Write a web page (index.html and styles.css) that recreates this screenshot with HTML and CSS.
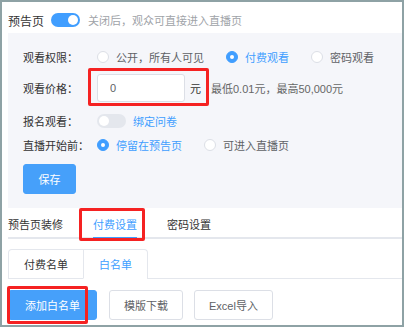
FILE: index.html
```html
<!DOCTYPE html>
<html lang="zh-CN">
<head>
    <meta charset="UTF-8">
    <meta name="viewport" content="width=device-width, initial-scale=1.0">
    <title>预告页设置</title>
    <link rel="stylesheet" href="styles.css">
</head>
<body>

<div class="frame">
    <div class="header">
        <span class="title">预告页</span>
        <span class="switch on"><i></i></span>
        <span class="tip">关闭后，观众可直接进入直播页</span>
    </div>

    <div class="panel">
        <div class="row row-auth">
            <span class="label">观看权限：</span>
            <span class="radio"><i></i>公开，所有人可见</span>
            <span class="radio checked"><i></i>付费观看</span>
            <span class="radio"><i></i>密码观看</span>
        </div>
        <div class="row row-price">
            <span class="label">观看价格：</span>
            <input type="text" class="price" value="0">
            <span class="unit">元</span>
            <span class="hint">最低0.01元，最高50,000元</span>
        </div>
        <div class="row row-signup">
            <span class="label">报名观看：</span>
            <span class="switch"><i></i></span>
            <a class="link">绑定问卷</a>
        </div>
        <div class="row row-before">
            <span class="label">直播开始前：</span>
            <span class="radio checked"><i></i>停留在预告页</span>
            <span class="radio"><i></i>可进入直播页</span>
        </div>
        <button class="btn btn-primary btn-save">保存</button>
    </div>

    <div class="tabs">
        <span class="tab">预告页装修</span>
        <span class="tab active">付费设置</span>
        <span class="tab">密码设置</span>
    </div>

    <div class="card-tabs">
        <div class="card-group">
            <span class="card-tab">付费名单</span>
            <span class="card-tab active">白名单</span>
        </div>
    </div>

    <div class="actions">
        <button class="btn btn-primary">添加白名单</button>
        <button class="btn">模版下载</button>
        <button class="btn">Excel导入</button>
    </div>

    <!-- 标注框 -->
    <div class="mark mark-price"></div>
    <div class="mark mark-tab"></div>
    <div class="mark mark-add"></div>
</div>

</body>
</html>
```

FILE: styles.css
```css
body {
    margin: 0;
    background: #fff;
    font-family: "Liberation Sans", "Noto Sans CJK SC", sans-serif;
    font-size: 11px;
    color: #333;
}
.frame {
    position: relative;
    width: 404px;
    height: 327px;
    box-sizing: border-box;
    border: 2px solid #8ea2a5;
    padding-left: 6px;
    overflow: hidden;
    background: #fff;
}
.header {
    display: flex;
    align-items: center;
    height: 24px;
    padding-top: 6px;
}
.title {
    font-size: 12px;
    color: #333;
}
.switch {
    position: relative;
    display: inline-block;
    width: 29px;
    height: 14px;
    border-radius: 7px;
    background: #e4e7ed;
    margin-left: 7px;
}
.switch i {
    position: absolute;
    top: 2px;
    left: 2px;
    width: 10px;
    height: 10px;
    border-radius: 50%;
    background: #fff;
}
.switch.on {
    background: #409eff;
}
.switch.on i {
    left: 17px;
}
.tip {
    margin-left: 8px;
    color: #a0a3a8;
}
.panel {
    margin-top: 1px;
    background: #f5f6fa;
    padding: 11px 0 14px 15px;
}
.row {
    display: flex;
    align-items: center;
}
.label {
    width: 74px;
    color: #333;
}
.row-auth {
    height: 25px;
}
.row-price {
    height: 28px;
    margin-top: 5px;
}
.row-signup {
    height: 22px;
    margin-top: 8px;
}
.row-before {
    height: 22px;
    margin-top: 2px;
}
.radio {
    display: flex;
    align-items: center;
    margin-right: 22px;
    color: #606266;
}
.radio i {
    width: 10px;
    height: 10px;
    border: 1px solid #dcdfe6;
    border-radius: 50%;
    background: #fff;
    margin-right: 7px;
    box-sizing: content-box;
}
.radio.checked {
    color: #409eff;
}
.radio.checked i {
    background: #409eff;
    border-color: #409eff;
    position: relative;
}
.radio.checked i::after {
    content: "";
    position: absolute;
    left: 3px;
    top: 3px;
    width: 4px;
    height: 4px;
    border-radius: 50%;
    background: #fff;
}
.price {
    width: 88px;
    height: 28px;
    box-sizing: border-box;
    border: 1px solid #dcdfe6;
    border-radius: 3px;
    padding: 0 12px;
    font-family: inherit;
    font-size: 11px;
    color: #606266;
    background: #fff;
    outline: none;
}
.unit {
    margin-left: 5px;
    color: #333;
}
.hint {
    margin-left: 10px;
    color: #666;
}
.row-signup .switch {
    margin-left: 0;
}
.link {
    margin-left: 7px;
    color: #409eff;
}
.btn {
    height: 30px;
    padding: 0 14px;
    border: 1px solid #dcdfe6;
    border-radius: 3px;
    background: #fff;
    color: #606266;
    font-family: inherit;
    font-size: 11px;
    cursor: pointer;
}
.btn-primary {
    background: #46a0fa;
    border-color: #46a0fa;
    color: #fff;
}
.btn-save {
    display: block;
    width: 53px;
    margin-top: 8px;
    padding: 0;
}
.tabs {
    display: flex;
    height: 31px;
    box-shadow: inset 0 -2px 0 #e4e7ed;
}
.tab {
    display: flex;
    align-items: center;
    margin-right: 30px;
    box-sizing: border-box;
    height: 31px;
    color: #333;
}
.tab.active {
    color: #409eff;
    border-bottom: 2px solid #409eff;
    padding-top: 2px;
}
.card-tabs {
    display: flex;
    margin-top: 10px;
    border-bottom: 1px solid #e4e7ed;
}
.card-group {
    display: flex;
    border: 1px solid #e4e7ed;
    border-bottom: none;
    border-radius: 4px 4px 0 0;
    margin-bottom: -1px;
}
.card-tab {
    display: flex;
    align-items: center;
    height: 28px;
    padding: 0 15px;
    color: #333;
    border-bottom: 1px solid #e4e7ed;
}
.card-tab + .card-tab {
    border-left: 1px solid #e4e7ed;
}
.card-tab.active {
    color: #409eff;
    border-bottom-color: #fff;
}
.actions {
    display: flex;
    gap: 11px;
    margin-top: 11px;
}
.actions .btn-primary {
    padding: 0 16px;
    margin-right: 1px;
}
.mark {
    position: absolute;
    border: 3px solid #f52222;
    border-radius: 2px;
    box-sizing: border-box;
}
.mark-price {
    left: 86px;
    top: 66px;
    width: 121px;
    height: 38px;
}
.mark-tab {
    left: 77px;
    top: 206px;
    width: 66px;
    height: 33px;
}
.mark-add {
    left: 5px;
    top: 284px;
    width: 81px;
    height: 38px;
}
```
